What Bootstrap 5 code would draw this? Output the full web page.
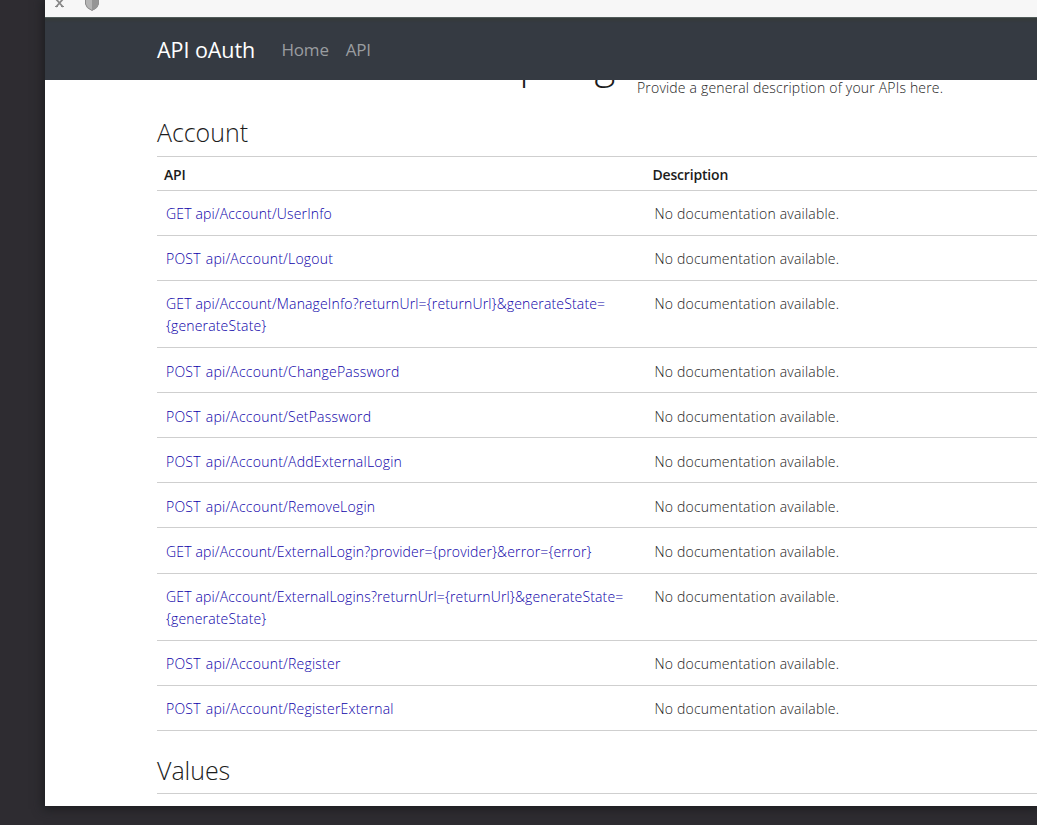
<!DOCTYPE html>
<html lang="en">
<head>
<meta charset="utf-8">
<title>API oAuth</title>
<link href="https://cdn.jsdelivr.net/npm/bootstrap@5.3.0/dist/css/bootstrap.min.css" rel="stylesheet">
<style>
body{background:#2e2c31;font-family:"Open Sans","Noto Sans",sans-serif;font-weight:300;font-size:14px;color:#1c1c1c;height:825px;overflow:hidden}
.browser{margin-left:45px;height:806px;background:#fff;box-shadow:0 1px 10px 2px #1c1d20}
.toolbar-strip{height:17px;background:#f7f7f7}
.toolbar-strip svg{display:block}
.site-nav{height:63px;background:#353a42;border-top:1px solid #515c5a;padding:2px 0 0 112px;box-shadow:inset 0 4px 2px -1px #353b3c}
.site-nav .navbar-brand{color:#fff;font-size:21.5px;font-weight:400;line-height:28px;margin:0 26.5px 0 0;padding:0;width:98px;letter-spacing:-.05px;white-space:nowrap}
.site-nav .nav-link{color:#9a9da0;font-size:17px;font-weight:400;line-height:24px;white-space:nowrap;letter-spacing:-.2px}
.site-nav .navbar-nav{gap:17px}
.page-head{height:32px;overflow:hidden}
.page-head h1{width:480px;font-size:40px;font-weight:300;line-height:50px;margin:-42px 0 0;letter-spacing:-.95px;white-space:nowrap}
.page-head p{line-height:16px;margin:0;letter-spacing:.18px}
.content-area{margin-left:112px}
h2{font-size:25px;font-weight:300;line-height:32px;margin:0;letter-spacing:-.05px}
.api-line{border-bottom:1px solid #cfcfcf;height:45.07px;padding:12.35px 0 0 9px;line-height:22px;letter-spacing:.2px}
.api-line.two-lines{height:67.07px}
.api-header{height:34px;border-bottom:1px solid #cfcfcf;padding:7px 0 0 7px;line-height:22px;font-weight:600;letter-spacing:-.18px}
.api-name{width:488.5px;flex:none}
.api-name a{color:#0c00a8;text-decoration:none;letter-spacing:.15px}
.api-name .post-link{letter-spacing:.22px;word-spacing:1.2px}
.rule-top{border-top:1px solid #cfcfcf}
.values-title{padding-top:23px}
.values-rule{margin-top:7px}
</style>
</head>
<body>
<div class="browser">
  <div class="toolbar-strip d-flex">
    <svg width="70" height="17" viewBox="0 0 70 17">
      <path d="M11 -1l7 8M18 -1l-7 8" stroke="#888" stroke-width="1.8" fill="none"/><path d="M10 6.5h3M16 6.5h3" stroke="#888"/>
      <path d="M40.5 -1H53.500V4Q53 8 47 10.500Q41 8 40.500 4Z" fill="#b5b5b5" stroke="#8c8c8c"/><path d="M47 -1H53.500V4Q53 8 47 10.500Z" fill="#969696"/>
    </svg>
  </div>
  <nav class="navbar navbar-expand site-nav justify-content-start">
    <a class="navbar-brand" href="#">API oAuth</a>
    <div class="navbar-nav flex-row"><a class="nav-link p-0" href="#">Home</a><a class="nav-link p-0" href="#">API</a></div>
  </nav>
  <main class="content-area">
    <header class="page-head d-flex"><h1>ASP.NET Web API Help Page</h1><p>Provide a general description of your APIs here.</p></header>
    <h2 class="pt-1">Account</h2>
    <div class="rule-top mt-2">
      <div class="api-header d-flex"><div class="api-name">API</div><div>Description</div></div>
      <div class="api-line d-flex"><div class="api-name"><a href="#">GET api/Account/UserInfo</a></div><div>No documentation available.</div></div>
      <div class="api-line d-flex"><div class="api-name"><a class="post-link" href="#">POST api/Account/Logout</a></div><div>No documentation available.</div></div>
      <div class="api-line two-lines d-flex"><div class="api-name"><a href="#">GET api/Account/ManageInfo?returnUrl={returnUrl}&amp;generateState=<br>{generateState}</a></div><div>No documentation available.</div></div>
      <div class="api-line d-flex"><div class="api-name"><a class="post-link" href="#">POST api/Account/ChangePassword</a></div><div>No documentation available.</div></div>
      <div class="api-line d-flex"><div class="api-name"><a class="post-link" href="#">POST api/Account/SetPassword</a></div><div>No documentation available.</div></div>
      <div class="api-line d-flex"><div class="api-name"><a class="post-link" href="#">POST api/Account/AddExternalLogin</a></div><div>No documentation available.</div></div>
      <div class="api-line d-flex"><div class="api-name"><a class="post-link" href="#">POST api/Account/RemoveLogin</a></div><div>No documentation available.</div></div>
      <div class="api-line d-flex"><div class="api-name"><a href="#">GET api/Account/ExternalLogin?provider={provider}&amp;error={error}</a></div><div>No documentation available.</div></div>
      <div class="api-line two-lines d-flex"><div class="api-name"><a href="#">GET api/Account/ExternalLogins?returnUrl={returnUrl}&amp;generateState=<br>{generateState}</a></div><div>No documentation available.</div></div>
      <div class="api-line d-flex"><div class="api-name"><a class="post-link" href="#">POST api/Account/Register</a></div><div>No documentation available.</div></div>
      <div class="api-line d-flex"><div class="api-name"><a class="post-link" href="#">POST api/Account/RegisterExternal</a></div><div>No documentation available.</div></div>
    </div>
    <h2 class="values-title">Values</h2>
    <div class="rule-top values-rule"></div>
  </main>
</div>
<script src="https://cdn.jsdelivr.net/npm/bootstrap@5.3.0/dist/js/bootstrap.bundle.min.js"></script>
</body>
</html>
